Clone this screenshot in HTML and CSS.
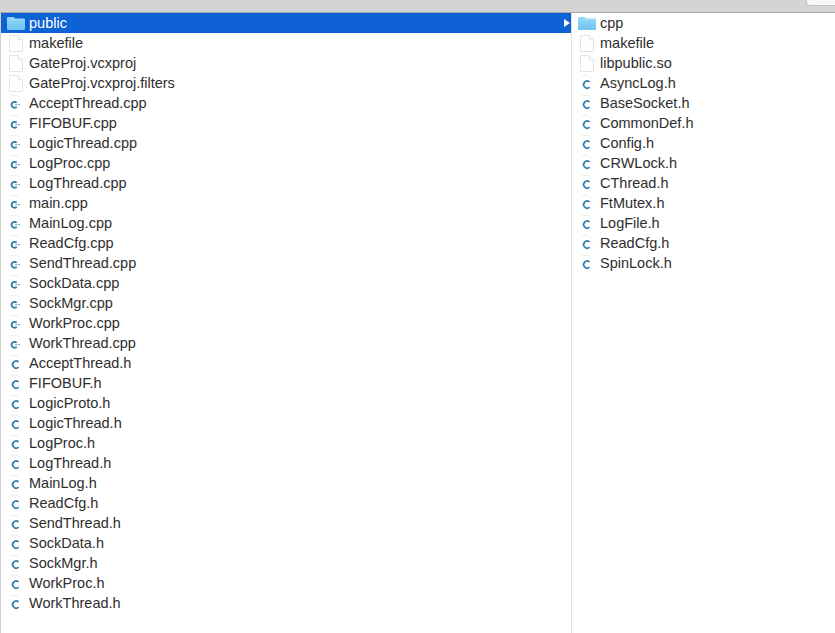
FILE: index.html
```html
<!DOCTYPE html>
<html lang="en">
<head>
    <meta charset="UTF-8">
    <title>public</title>
    <link rel="stylesheet" href="styles.css">
</head>
<body>
    <svg class="defs" width="0" height="0">
        <defs>
            <linearGradient id="folderFill" x1="0" y1="0" x2="0" y2="1">
                <stop offset="0" stop-color="#92d8f9"/>
                <stop offset="1" stop-color="#70c4f2"/>
            </linearGradient>
            <symbol id="folder" viewBox="0 0 18 13">
                <path d="M0 1.300C0 .5.500 0 1.300 0h4.800c.5 0 .8.2 1.100.6l.8 1h8.700c.7 0 1.300.6 1.300 1.300v8.800c0 .7-.6 1.300-1.300 1.300H1.300C.5 13 0 12.400 0 11.700z" fill="url(#folderFill)"/>
                <path d="M0 2.800h18" stroke="#a9e0fb" stroke-width=".7" fill="none"/>
            </symbol>
            <symbol id="doc" viewBox="0 0 14 17">
                <path d="M.5.500h8.700l4.300 4.300v11.700h-13z" fill="#fff" stroke="#e4e4e4"/>
                <path d="M9.200.5v4.300h4.300" fill="#f7f7f7" stroke="#e4e4e4"/>
            </symbol>
            <symbol id="hfile" viewBox="0 0 14 17">
                <path d="M1.500.5h7l3.500 3.500" stroke="#eeeeee" fill="none"/>
                <path d="M9.500 7A3.500 3.500 0 1 0 9.500 12.200" stroke="#2c7aa6" stroke-width="1.600" fill="none"/>
            </symbol>
            <symbol id="cppfile" viewBox="0 0 14 17">
                <path d="M1.500.5h7l3.500 3.500" stroke="#eeeeee" fill="none"/>
                <path d="M7.700 7.700A3 3 0 1 0 7.700 11.900" stroke="#2c7aa6" stroke-width="1.800" fill="none"/>
                <path d="M6.300 9.800h1.800M9 9.800h2" stroke="#4f93bb" stroke-width="1.100"/>
            </symbol>
        </defs>
    </svg>

    <div class="toolbar">
        <div class="toolbar-button"></div>
    </div>

    <div class="browser">
        <!-- Left column -->
        <div class="column column-left">
            <div class="row selected">
                <svg class="icon folder"><use href="#folder"/></svg>
                <span class="name">public</span>
                <span class="arrow"></span>
            </div>
            <div class="row"><svg class="icon"><use href="#doc"/></svg><span class="name">makefile</span></div>
            <div class="row"><svg class="icon"><use href="#doc"/></svg><span class="name">GateProj.vcxproj</span></div>
            <div class="row"><svg class="icon"><use href="#doc"/></svg><span class="name">GateProj.vcxproj.filters</span></div>
            <div class="row"><svg class="icon"><use href="#cppfile"/></svg><span class="name">AcceptThread.cpp</span></div>
            <div class="row"><svg class="icon"><use href="#cppfile"/></svg><span class="name">FIFOBUF.cpp</span></div>
            <div class="row"><svg class="icon"><use href="#cppfile"/></svg><span class="name">LogicThread.cpp</span></div>
            <div class="row"><svg class="icon"><use href="#cppfile"/></svg><span class="name">LogProc.cpp</span></div>
            <div class="row"><svg class="icon"><use href="#cppfile"/></svg><span class="name">LogThread.cpp</span></div>
            <div class="row"><svg class="icon"><use href="#cppfile"/></svg><span class="name">main.cpp</span></div>
            <div class="row"><svg class="icon"><use href="#cppfile"/></svg><span class="name">MainLog.cpp</span></div>
            <div class="row"><svg class="icon"><use href="#cppfile"/></svg><span class="name">ReadCfg.cpp</span></div>
            <div class="row"><svg class="icon"><use href="#cppfile"/></svg><span class="name">SendThread.cpp</span></div>
            <div class="row"><svg class="icon"><use href="#cppfile"/></svg><span class="name">SockData.cpp</span></div>
            <div class="row"><svg class="icon"><use href="#cppfile"/></svg><span class="name">SockMgr.cpp</span></div>
            <div class="row"><svg class="icon"><use href="#cppfile"/></svg><span class="name">WorkProc.cpp</span></div>
            <div class="row"><svg class="icon"><use href="#cppfile"/></svg><span class="name">WorkThread.cpp</span></div>
            <div class="row"><svg class="icon"><use href="#hfile"/></svg><span class="name">AcceptThread.h</span></div>
            <div class="row"><svg class="icon"><use href="#hfile"/></svg><span class="name">FIFOBUF.h</span></div>
            <div class="row"><svg class="icon"><use href="#hfile"/></svg><span class="name">LogicProto.h</span></div>
            <div class="row"><svg class="icon"><use href="#hfile"/></svg><span class="name">LogicThread.h</span></div>
            <div class="row"><svg class="icon"><use href="#hfile"/></svg><span class="name">LogProc.h</span></div>
            <div class="row"><svg class="icon"><use href="#hfile"/></svg><span class="name">LogThread.h</span></div>
            <div class="row"><svg class="icon"><use href="#hfile"/></svg><span class="name">MainLog.h</span></div>
            <div class="row"><svg class="icon"><use href="#hfile"/></svg><span class="name">ReadCfg.h</span></div>
            <div class="row"><svg class="icon"><use href="#hfile"/></svg><span class="name">SendThread.h</span></div>
            <div class="row"><svg class="icon"><use href="#hfile"/></svg><span class="name">SockData.h</span></div>
            <div class="row"><svg class="icon"><use href="#hfile"/></svg><span class="name">SockMgr.h</span></div>
            <div class="row"><svg class="icon"><use href="#hfile"/></svg><span class="name">WorkProc.h</span></div>
            <div class="row"><svg class="icon"><use href="#hfile"/></svg><span class="name">WorkThread.h</span></div>
        </div>

        <!-- Right column -->
        <div class="column column-right">
            <div class="row"><svg class="icon folder"><use href="#folder"/></svg><span class="name">cpp</span></div>
            <div class="row"><svg class="icon"><use href="#doc"/></svg><span class="name">makefile</span></div>
            <div class="row"><svg class="icon"><use href="#doc"/></svg><span class="name">libpublic.so</span></div>
            <div class="row"><svg class="icon"><use href="#hfile"/></svg><span class="name">AsyncLog.h</span></div>
            <div class="row"><svg class="icon"><use href="#hfile"/></svg><span class="name">BaseSocket.h</span></div>
            <div class="row"><svg class="icon"><use href="#hfile"/></svg><span class="name">CommonDef.h</span></div>
            <div class="row"><svg class="icon"><use href="#hfile"/></svg><span class="name">Config.h</span></div>
            <div class="row"><svg class="icon"><use href="#hfile"/></svg><span class="name">CRWLock.h</span></div>
            <div class="row"><svg class="icon"><use href="#hfile"/></svg><span class="name">CThread.h</span></div>
            <div class="row"><svg class="icon"><use href="#hfile"/></svg><span class="name">FtMutex.h</span></div>
            <div class="row"><svg class="icon"><use href="#hfile"/></svg><span class="name">LogFile.h</span></div>
            <div class="row"><svg class="icon"><use href="#hfile"/></svg><span class="name">ReadCfg.h</span></div>
            <div class="row"><svg class="icon"><use href="#hfile"/></svg><span class="name">SpinLock.h</span></div>
        </div>
    </div>
</body>
</html>
```

FILE: styles.css
```css
html, body {
    height: 100%;
}

body {
    font-family: "Liberation Sans", Arial, sans-serif;
    font-size: 14.5px;
    color: #2e2e2e;
    background-color: #fff;
    margin: 0;
    display: flex;
    flex-direction: column;
    overflow: hidden;
}

.defs {
    display: block;
    height: 0;
}

.toolbar {
    height: 12px;
    flex: none;
    display: flex;
    justify-content: flex-end;
    background-color: #d4d4d4;
    border-bottom: 1px solid #a9a9a9;
}

.toolbar-button {
    width: 28px;
    height: 5px;
    background-color: #f7f7f7;
    border: 1px solid #c2c2c2;
    border-top: none;
    border-right: none;
    border-bottom-left-radius: 4px;
}

.browser {
    flex: 1;
    display: flex;
    border-left: 1px solid #d0d0d0;
}

.column {
    display: flex;
    flex-direction: column;
}

.column-left {
    width: 570px;
    border-right: 1px solid #e2e2e2;
}

.column-right {
    flex: 1;
}

.row {
    height: 20px;
    flex: none;
    display: flex;
    align-items: center;
    padding-left: 8px;
}

.row.selected {
    background-color: #0f62d6;
    color: #fff;
}

.icon {
    width: 14px;
    height: 17px;
    margin-right: 6px;
    flex: none;
}

.icon.folder {
    width: 18px;
    height: 13px;
    margin-left: -2px;
    margin-right: 4px;
}

.name {
    flex: 1;
    white-space: nowrap;
}

.arrow {
    width: 0;
    height: 0;
    margin-right: 1px;
    border-left: 6px solid #fff;
    border-top: 4px solid transparent;
    border-bottom: 4px solid transparent;
}
```
